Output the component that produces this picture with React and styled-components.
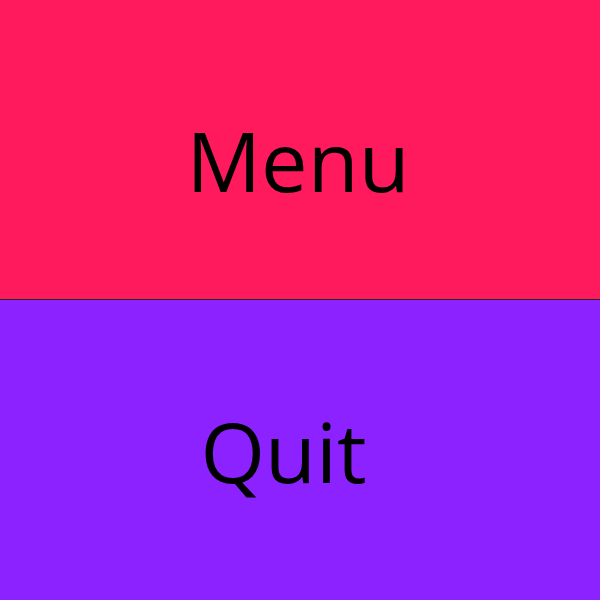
import React from 'react';
import styled, { createGlobalStyle } from 'styled-components';

const GlobalStyle = createGlobalStyle`
  html, body {
    margin: 0;
    padding: 0;
  }
  body {
    font-family: "Open Sans", "Noto Sans", sans-serif;
  }
`;

const Screen = styled.div`
  display: flex;
  flex-flow: column nowrap;
  width: 600px;
  height: 600px;
`;

const MenuButton = styled.div`
  display: flex;
  align-items: center;
  justify-content: center;
  box-sizing: border-box;
  flex: 0 0 300px;
  padding: ${props => props.pad || '0'};
  background: ${props => props.bg};
  border-bottom: ${props => (props.divider ? '1px solid #222' : 'none')};
  color: #000;
  font-size: 83px;
  line-height: 1;
`;

const App = () => {
  return (
    <Screen>
      <GlobalStyle />
      <MenuButton bg='#ff195d' pad='20px 4px 0 0' divider>Menu</MenuButton>
      <MenuButton bg='#8c22ff' pad='0 33px 0 0'>Quit</MenuButton>
    </Screen>
  )
}

export default App;
